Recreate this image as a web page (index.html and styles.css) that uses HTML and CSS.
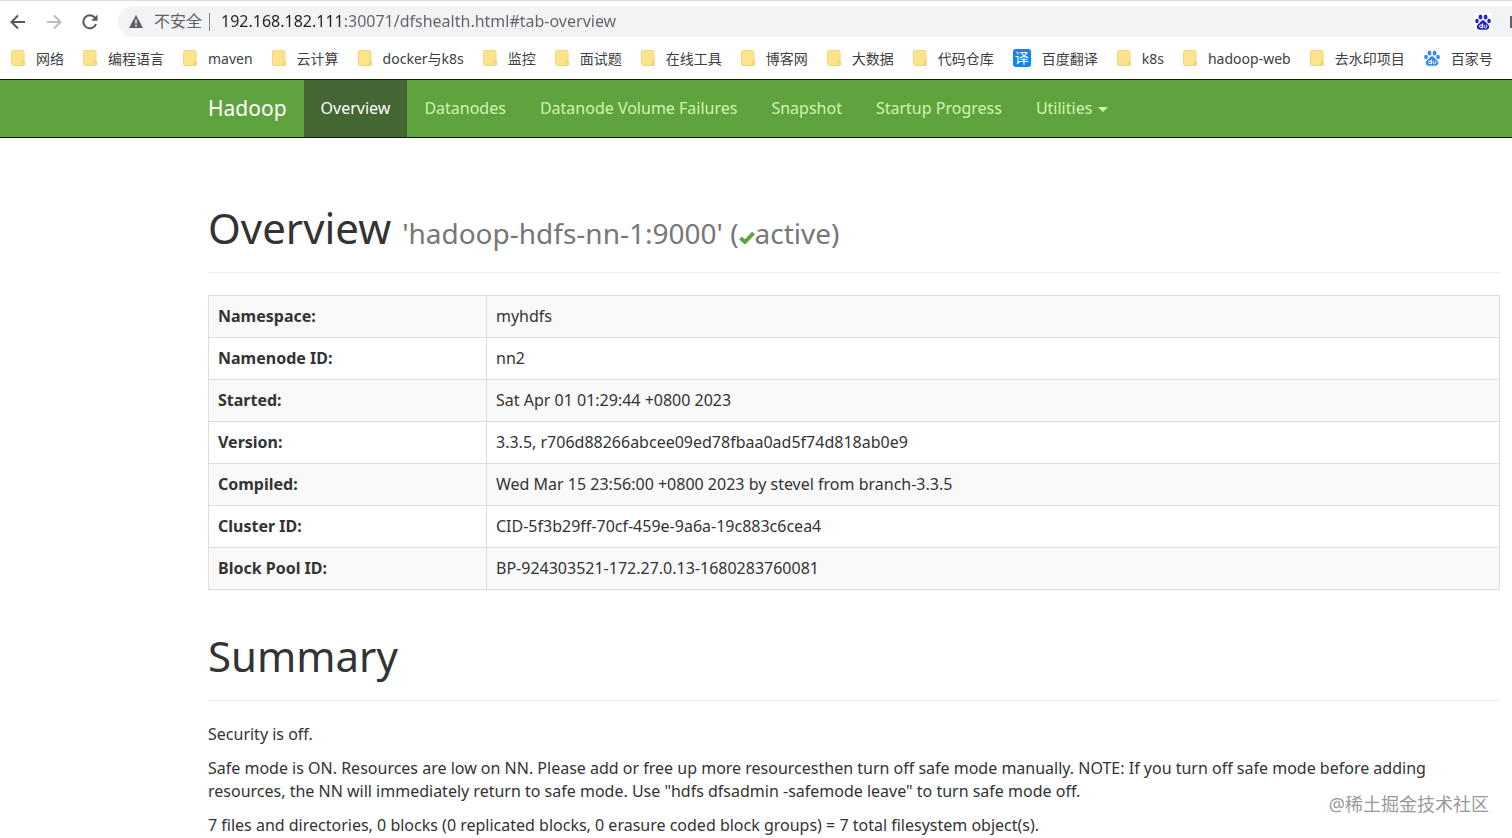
FILE: index.html
```html
<!DOCTYPE html>
<html lang="zh-CN">
<head>
    <meta charset="UTF-8" />
    <title>Namenode information</title>
    <link rel="stylesheet" href="styles.css">
</head>
<body>
    <!-- shared icons -->
    <svg class="sprite" aria-hidden="true">
        <symbol id="folder" viewBox="0 0 14 16">
            <path d="M2 .5h9.500q1.500 0 1.500 1.500v9.500l.6 2.500q0 1.500-1.600 1.500H2Q.5 15.500.5 14V2Q.5.500 2 .5z" fill="#fde48c" stroke="#f3d679"/>
            <path d="M12.500 11l-1.700 3q0 1.500 1.500 1.500 1.500-.3 1.200-1.700z" fill="#fde99b" stroke="#edc95c"/>
        </symbol>
        <symbol id="paw" viewBox="0 0 16 16">
            <g fill="currentColor">
                <ellipse cx="5.500" cy="2.900" rx="1.900" ry="2.500"/>
                <ellipse cx="10.600" cy="2.900" rx="1.900" ry="2.500"/>
                <ellipse cx="2" cy="7" rx="1.800" ry="2.300"/>
                <ellipse cx="14" cy="7" rx="1.800" ry="2.300"/>
                <path d="M8 6.300c1.800 0 2.300 1.500 3.500 2.700s2.700 2 2.700 3.800c0 1.900-1.300 2.900-3 2.900H4.800c-1.700 0-3-1-3-2.900 0-1.800 1.500-2.600 2.700-3.800S6.200 6.300 8 6.300z"/>
            </g>
            <g fill="none" stroke="#fff">
                <circle cx="6" cy="12.300" r="1.400"/>
                <path d="M7.500 9.500v4.700M9.200 10.800v2q0 1.200 1.200 1.200t1.300-1.200v-2"/>
            </g>
        </symbol>
    </svg>

    <div class="browser">
        <div class="toolbar">
            <button class="tool" aria-label="返回">
                <svg width="16" height="16" viewBox="0 0 16 16"><path d="M15 8H2M8 1.500L1.500 8 8 14.500"/></svg>
            </button>
            <button class="tool" aria-label="前进" disabled>
                <svg width="16" height="16" viewBox="0 0 16 16"><path d="M1 8h13M8 1.500L14.500 8 8 14.500"/></svg>
            </button>
            <button class="tool" aria-label="重新加载">
                <svg width="16" height="16" viewBox="0 0 16 16"><path d="M14 10A6.500 6.500 0 1 1 12.800 3.600L14 5"/><path class="solid" d="M15.500 .5v6.300H9.200z"/></svg>
            </button>
            <div class="omnibox">
                <svg class="warn" width="14" height="13" viewBox="0 0 14 13"><path d="M7 0l7 13H0z" fill="#5f6368"/><path d="M7 4.500v4M7 9.800v1.600" stroke="#f1f3f4" stroke-width="1.500"/></svg>
                <label class="insecure" for="url">不安全</label>
                <span class="sep"></span>
                <input type="text" id="url" class="url" value="192.168.182.111:30071/dfshealth.html#tab-overview" spellcheck="false" />
                <svg class="ext" width="16" height="16"><use href="#paw"/></svg>
                <span class="edge"></span>
            </div>
        </div>
        <nav class="bookmarks">
            <a href="#"><svg class="folder"><use href="#folder"/></svg>网络</a>
            <a href="#"><svg class="folder"><use href="#folder"/></svg>编程语言</a>
            <a href="#"><svg class="folder"><use href="#folder"/></svg>maven</a>
            <a href="#"><svg class="folder"><use href="#folder"/></svg>云计算</a>
            <a href="#"><svg class="folder"><use href="#folder"/></svg>docker与k8s</a>
            <a href="#"><svg class="folder"><use href="#folder"/></svg>监控</a>
            <a href="#"><svg class="folder"><use href="#folder"/></svg>面试题</a>
            <a href="#"><svg class="folder"><use href="#folder"/></svg>在线工具</a>
            <a href="#"><svg class="folder"><use href="#folder"/></svg>博客网</a>
            <a href="#"><svg class="folder"><use href="#folder"/></svg>大数据</a>
            <a href="#"><svg class="folder"><use href="#folder"/></svg>代码仓库</a>
            <a href="#"><span class="fanyi">译</span>百度翻译</a>
            <a href="#"><svg class="folder"><use href="#folder"/></svg>k8s</a>
            <a href="#"><svg class="folder"><use href="#folder"/></svg>hadoop-web</a>
            <a href="#"><svg class="folder"><use href="#folder"/></svg>去水印项目</a>
            <a href="#"><svg class="paw"><use href="#paw"/></svg>百家号</a>
        </nav>
    </div>

    <header class="navbar">
        <a class="brand" href="#">Hadoop</a>
        <nav class="nav">
            <a class="active" href="#tab-overview">Overview</a>
            <a href="#tab-datanode">Datanodes</a>
            <a href="#tab-datanode-volume-failures">Datanode Volume Failures</a>
            <a href="#tab-snapshot">Snapshot</a>
            <a href="#tab-startup-progress">Startup Progress</a>
            <a href="#">Utilities <span class="caret"></span></a>
        </nav>
    </header>

    <main class="container">
        <div class="page-header">
            <h1>Overview <small>'hadoop-hdfs-nn-1:9000' (<svg class="check" viewBox="0 0 16 13"><path d="M1.500 7L6 11 14.500 2" fill="none" stroke="#5fa33e" stroke-width="4"/></svg>active)</small></h1>
        </div>
        <table class="table">
            <tr><th scope="row">Namespace:</th><td>myhdfs</td></tr>
            <tr><th scope="row">Namenode ID:</th><td>nn2</td></tr>
            <tr><th scope="row">Started:</th><td>Sat Apr 01 01:29:44 +0800 2023</td></tr>
            <tr><th scope="row">Version:</th><td>3.3.5, r706d88266abcee09ed78fbaa0ad5f74d818ab0e9</td></tr>
            <tr><th scope="row">Compiled:</th><td>Wed Mar 15 23:56:00 +0800 2023 by stevel from branch-3.3.5</td></tr>
            <tr><th scope="row">Cluster ID:</th><td>CID-5f3b29ff-70cf-459e-9a6a-19c883c6cea4</td></tr>
            <tr><th scope="row">Block Pool ID:</th><td>BP-924303521-172.27.0.13-1680283760081</td></tr>
        </table>

        <div class="page-header">
            <h1>Summary</h1>
        </div>
        <p>Security is off.</p>
        <p>Safe mode is ON. Resources are low on NN. Please add or free up more resourcesthen turn off safe mode manually. NOTE: If you turn off safe mode before adding resources, the NN will immediately return to safe mode. Use "hdfs dfsadmin -safemode leave" to turn safe mode off.</p>
        <p>7 files and directories, 0 blocks (0 replicated blocks, 0 erasure coded block groups) = 7 total filesystem object(s).</p>
    </main>

    <div class="watermark">@稀土掘金技术社区</div>
</body>
</html>
```

FILE: styles.css
```css
* {
    box-sizing: border-box;
}

html {
    height: 100%;
    overflow: hidden;
}

body {
    margin: 0;
    background-color: #fff;
    color: #333;
    font-family: "Noto Sans", "Noto Sans CJK SC", sans-serif;
    font-size: 16px;
    line-height: 23px;
}

a {
    text-decoration: none;
}

.sprite {
    display: none;
}

/* Browser bars */
.browser {
    border-top: 1px solid #dadce0;
}

.toolbar {
    display: flex;
    align-items: center;
    padding: 5px 0 0 10px;
}

.tool {
    display: flex;
    padding: 0;
    margin-right: 20px;
    border: none;
    background: none;
}

.tool svg {
    fill: none;
    stroke: #55585c;
    stroke-width: 2;
}

.tool .solid {
    fill: #55585c;
    stroke: none;
}

.tool:disabled svg {
    stroke: #b9bbbe;
}

.omnibox {
    flex: 1;
    display: flex;
    align-items: center;
    height: 31px;
    padding-left: 11px;
    background-color: #f1f3f4;
    border-radius: 16px 0 0 16px;
}

.insecure {
    margin-left: 11px;
    color: #5f6368;
}

.sep {
    width: 1px;
    height: 18px;
    margin: 0 11px 0 7px;
    background-color: #80868b;
}

/* host is darker than port and path */
.url {
    flex: 1;
    min-width: 0;
    padding: 0;
    border: none;
    outline: none;
    font: inherit;
    color: transparent;
    background: linear-gradient(to right, #202124 123px, #5f6368 123px);
    -webkit-background-clip: text;
    background-clip: text;
}

.ext {
    width: 18px;
    height: 18px;
    padding: 1px;
    margin-right: 18px;
    background-color: #fff;
    color: #2423c4;
}

.edge {
    width: 2px;
    height: 12px;
    background-color: #5f6368;
}

.bookmarks {
    display: flex;
    align-items: center;
    gap: 19px;
    height: 42px;
    padding: 0 0 0 11px;
    overflow: hidden;
}

.bookmarks a {
    display: flex;
    flex: none;
    align-items: center;
    gap: 11px;
    color: #3c4043;
    font-size: 14px;
    white-space: nowrap;
}

.folder {
    width: 14px;
    height: 16px;
}

.paw {
    width: 16px;
    height: 16px;
    color: #3385ff;
}

.fanyi {
    width: 18px;
    height: 18px;
    border-radius: 3px;
    background-color: #1283f0;
    color: #fff;
    line-height: 18px;
    text-align: center;
}

/* Navbar */
.navbar {
    display: flex;
    height: 59px;
    padding-left: 208px;
    background-color: #5fa33e;
    border: solid #101a0b;
    border-width: 1px 0;
}

.brand {
    padding: 17px 17px 0 0;
    color: #fff;
    font-size: 21px;
}

.nav {
    display: flex;
}

.nav a {
    padding: 17px 17px 0;
    color: #d2f5b0;
}

.nav .active {
    background-color: #446633;
    color: #fff;
}

.caret {
    display: inline-block;
    margin-left: 2px;
    vertical-align: middle;
    border: 5px solid transparent;
    border-top-color: currentColor;
    border-bottom: none;
}

/* Page */
.container {
    padding: 24px 12px 0 208px;
}

.page-header {
    margin-bottom: 22px;
    padding: 40px 0 19px;
    border-bottom: 1px solid #eee;
}

h1 {
    margin: 0;
    font-size: 42px;
    font-weight: 400;
    line-height: 51px;
}

h1 small {
    color: #777;
    font-size: 28px;
    line-height: 1;
}

.check {
    width: 16px;
    height: 13px;
}

.table {
    width: 100%;
    border-collapse: collapse;
}

.table th,
.table td {
    padding: 9px;
    border: 1px solid #ddd;
    text-align: left;
}

.table th {
    width: 278px;
}

.table tr:nth-child(odd) {
    background-color: #f9f9f9;
}

p {
    margin: 0 0 11px;
}

.watermark {
    position: absolute;
    right: 23px;
    bottom: 22px;
    color: #999;
    font-size: 18px;
}
```
